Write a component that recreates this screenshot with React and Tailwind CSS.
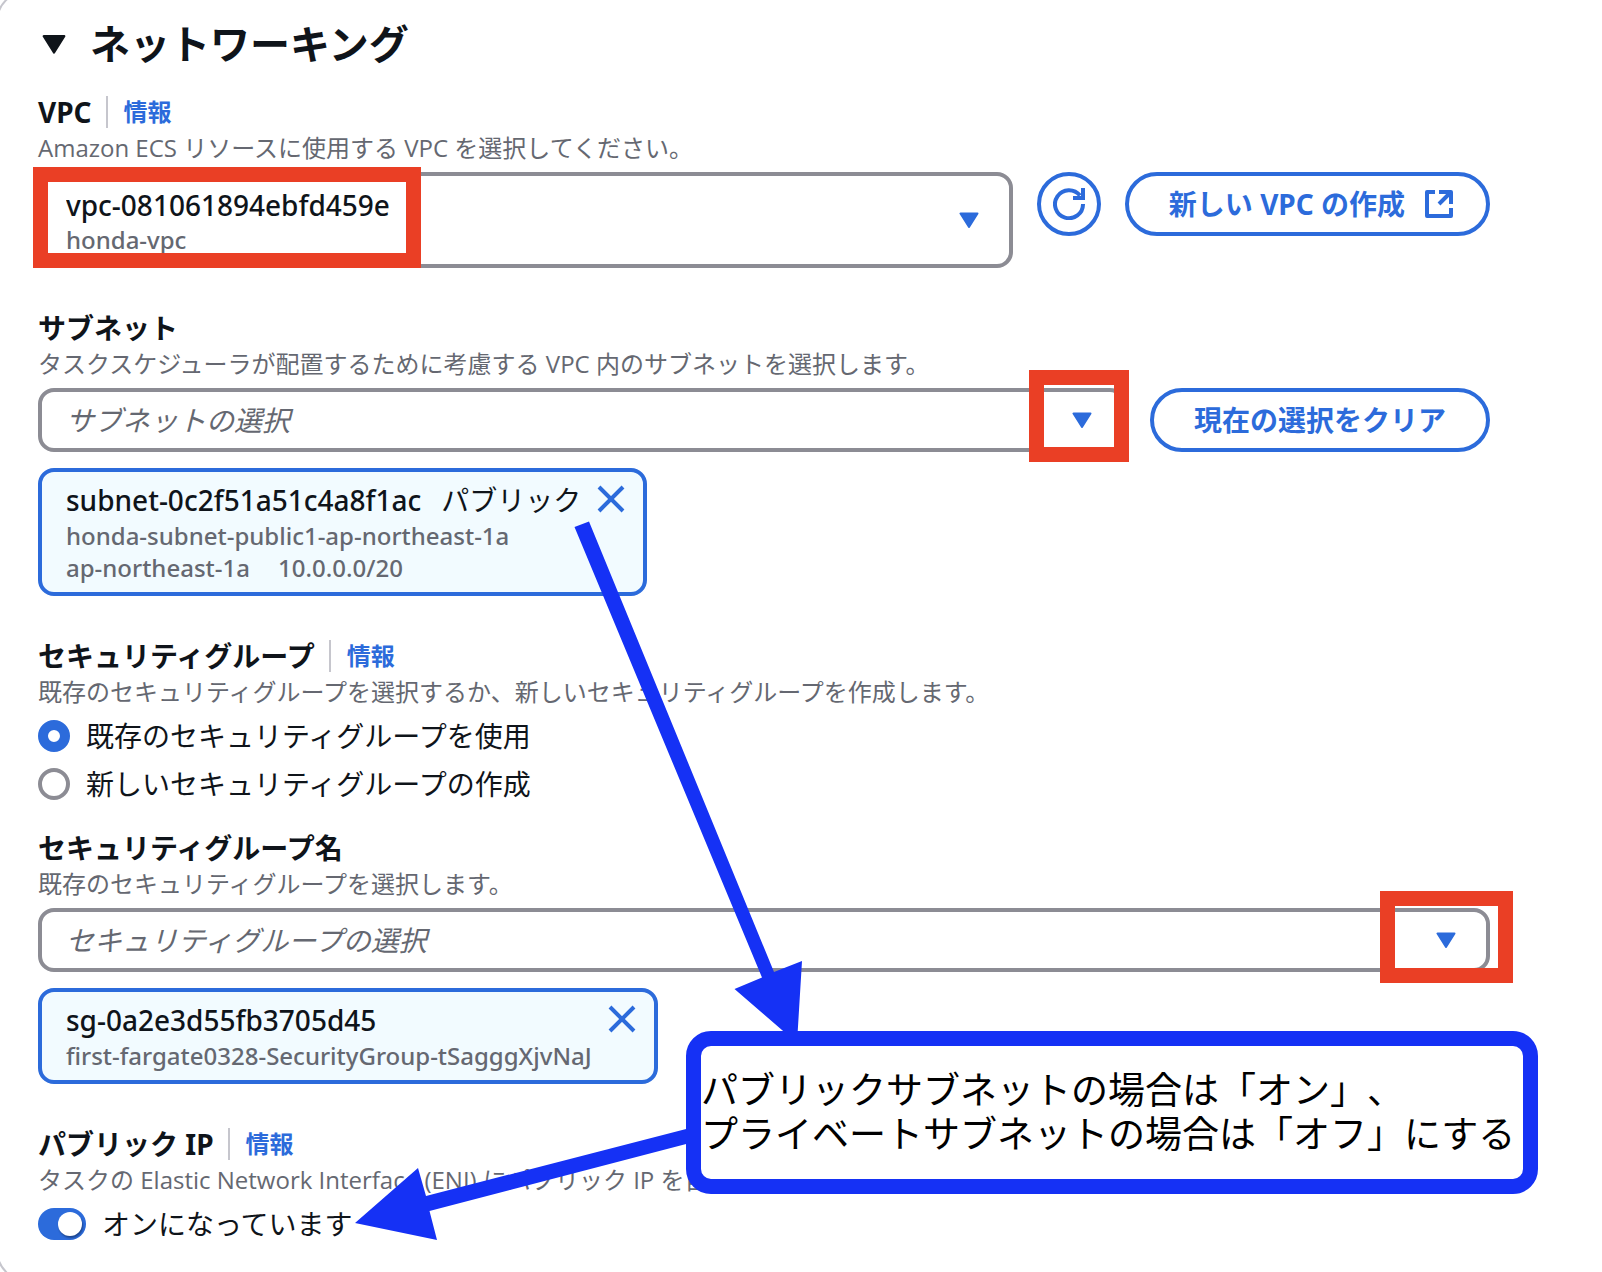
import React, { useState } from 'react';

const Caret = ({ className }) => (
  <svg className={className} viewBox="0 0 20 16" fill="currentColor" stroke="currentColor" strokeWidth="2" strokeLinejoin="round" aria-hidden="true">
    <path d="M1.5 1.5h17L10 15z" />
  </svg>
);

const RefreshIcon = () => (
  <svg className="w-8 h-8" viewBox="0 0 32 32" fill="none" stroke="currentColor" strokeWidth="4" aria-hidden="true">
    <path d="M30 16A14 14 0 1 1 27 7.500" />
    <path d="M30 0v10H20" />
  </svg>
);

const ExternalIcon = () => (
  <svg className="w-7 h-7" viewBox="0 0 28 28" fill="none" stroke="currentColor" strokeWidth="4" strokeLinejoin="round" aria-hidden="true">
    <path d="M10 2H2v24h24v-8" />
    <path d="M14 2h12v12M26 2L14 14" />
  </svg>
);

const CloseIcon = () => (
  <svg className="w-7 h-7" viewBox="0 0 28 28" fill="none" stroke="currentColor" strokeWidth="4" aria-hidden="true">
    <path d="M2 2l24 24M26 2L2 26" />
  </svg>
);

// Bold label with optional info link, and the grey description below it
const FieldHeader = ({ id, htmlFor, label, info, description }) => (
  <div className="mb-2">
    <div className="flex items-center h-10">
      <label id={id} htmlFor={htmlFor} className="text-[28px] leading-10 font-bold">{label}</label>
      {info && (
        <a href="#info" className="ml-3.5 pl-4 border-l-2 border-[#c6c6cd] text-2xl leading-8 font-bold text-[#2c6bdb]">情報</a>
      )}
    </div>
    <p className="text-2xl leading-8 text-[#656871] whitespace-nowrap font-['Open_Sans','Noto_Sans_CJK_JP',sans-serif]">{description}</p>
  </div>
);

const PlaceholderSelect = ({ id, placeholder, children }) => (
  <div className="relative flex-1">
    <select
      id={id}
      defaultValue=""
      className="block w-full h-16 appearance-none rounded-2xl border-4 border-[#8c8c94] bg-white pl-6 pr-16 text-[28px] italic text-[#656871]"
    >
      <option value="">{placeholder}</option>
    </select>
    <Caret className="absolute right-[34px] top-6 w-5 h-4 text-[#2c6bdb] pointer-events-none" />
    {children}
  </div>
);

const Token = ({ title, tag, name, details }) => (
  <div className="mt-4 w-fit flex items-start rounded-2xl border-4 border-[#2c6bdb] bg-[#f2fbff] py-2 pl-6 pr-[18px]">
    <div className="whitespace-nowrap">
      <p className="flex gap-5 text-[28px] leading-10 font-medium">
        <span>{title}</span>
        {tag && <span className="font-normal">{tag}</span>}
      </p>
      <p className="text-2xl leading-8 font-medium text-[#656871]">{name}</p>
      {details && (
        <p className="flex gap-7 text-2xl leading-8 font-medium text-[#656871]">
          {details.map((item) => <span key={item}>{item}</span>)}
        </p>
      )}
    </div>
    <button type="button" aria-label="削除" className="ml-4 mt-[5px] text-[#2c6bdb]"><CloseIcon /></button>
  </div>
);

const SECURITY_OPTIONS = [
  { value: 'existing', label: '既存のセキュリティグループを使用' },
  { value: 'new', label: '新しいセキュリティグループの作成' },
];

const App = () => {
  const [groupMode, setGroupMode] = useState('existing');
  const [publicIp, setPublicIp] = useState(true);

  return (
    <div className="relative overflow-hidden bg-white text-[#0f141a] font-['Noto_Sans','Noto_Sans_CJK_JP',sans-serif] [text-spacing-trim:space-all]">
      <main className="pt-5 pb-7 pl-[38px] pr-28">
        <h2 className="flex items-center text-[40px] leading-12 font-bold">
          <Caret className="ml-1 mr-6 w-6 h-5" />
          ネットワーキング
        </h2>

        {/* VPC */}
        <section className="mt-6">
          <FieldHeader htmlFor="vpc" label="VPC" info description="Amazon ECS リソースに使用する VPC を選択してください。" />
          <div className="flex items-start gap-6">
            <div className="relative flex-1">
              <select id="vpc" className="block w-full h-24 appearance-none rounded-2xl border-4 border-[#8c8c94] bg-white pt-2 pb-10 pl-6 pr-16 text-[28px] font-medium">
                <option>vpc-081061894ebfd459e</option>
              </select>
              <span className="absolute left-7 bottom-3 text-2xl leading-8 font-medium text-[#656871] pointer-events-none">honda-vpc</span>
              <Caret className="absolute right-[34px] top-10 w-5 h-4 text-[#2c6bdb] pointer-events-none" />
              <div className="absolute -left-[5px] -top-[5px] w-[388px] h-[101px] border-[15px] border-[#ea3f25] pointer-events-none" />
            </div>
            <button type="button" aria-label="更新" className="flex items-center justify-center w-16 h-16 rounded-full border-4 border-[#2c6bdb] text-[#2c6bdb]">
              <RefreshIcon />
            </button>
            <button type="button" className="flex items-center gap-5 h-16 pl-10 pr-[33px] rounded-full border-4 border-[#2c6bdb] text-[28px] font-bold text-[#2c6bdb] whitespace-nowrap">
              新しい VPC の作成
              <ExternalIcon />
            </button>
          </div>
        </section>

        {/* Subnets */}
        <section className="mt-10">
          <FieldHeader htmlFor="subnet" label="サブネット" description="タスクスケジューラが配置するために考慮する VPC 内のサブネットを選択します。" />
          <div className="flex gap-6">
            <PlaceholderSelect id="subnet" placeholder="サブネットの選択">
              <div className="absolute -right-[3px] -top-[18px] w-[100px] h-[92px] border-[15px] border-[#ea3f25] pointer-events-none" />
            </PlaceholderSelect>
            <button type="button" className="h-16 px-10 rounded-full border-4 border-[#2c6bdb] text-[28px] font-bold text-[#2c6bdb] whitespace-nowrap">
              現在の選択をクリア
            </button>
          </div>
          <Token
            title="subnet-0c2f51a51c4a8f1ac"
            tag="パブリック"
            name="honda-subnet-public1-ap-northeast-1a"
            details={['ap-northeast-1a', '10.0.0.0/20']}
          />
        </section>

        {/* Security group */}
        <section className="mt-10">
          <FieldHeader id="group-mode" label="セキュリティグループ" info description="既存のセキュリティグループを選択するか、新しいセキュリティグループを作成します。" />
          <div role="radiogroup" aria-labelledby="group-mode" className="flex flex-col gap-2">
            {SECURITY_OPTIONS.map(({ value, label }) => (
              <label key={value} className="flex items-center gap-4 text-[28px] leading-10">
                <input
                  type="radio"
                  name="group-mode"
                  checked={groupMode === value}
                  onChange={() => setGroupMode(value)}
                  className="appearance-none w-8 h-8 rounded-full border-4 border-[#8c8c94] bg-white checked:border-[10px] checked:border-[#2c6bdb]"
                />
                {label}
              </label>
            ))}
          </div>
        </section>

        <section className="mt-6">
          <FieldHeader htmlFor="group-name" label="セキュリティグループ名" description="既存のセキュリティグループを選択します。" />
          <PlaceholderSelect id="group-name" placeholder="セキュリティグループの選択">
            <div className="absolute -right-[23px] -top-[17px] w-[133px] h-[92px] border-[15px] border-[#ea3f25] pointer-events-none" />
          </PlaceholderSelect>
          <Token title="sg-0a2e3d55fb3705d45" name="first-fargate0328-SecurityGroup-tSagggXjvNaJ" />
        </section>

        {/* Public IP */}
        <section className="mt-10">
          <FieldHeader id="public-ip" label="パブリック IP" info description="タスクの Elastic Network Interface (ENI) にパブリック IP を自動" />
          <label className="flex items-center gap-4 w-fit text-[28px] leading-10">
            <span className="relative w-12 h-8">
              <input
                type="checkbox"
                role="switch"
                checked={publicIp}
                onChange={() => setPublicIp(!publicIp)}
                className="peer block appearance-none w-12 h-8 rounded-full bg-[#8c8c94] checked:bg-[#2c6bdb]"
              />
              <span className="absolute left-1 top-1 w-6 h-6 rounded-full bg-white shadow-[1px_2px_2px_rgba(0,0,0,0.35)] peer-checked:left-5 pointer-events-none" />
            </span>
            オンになっています
          </label>
        </section>
      </main>

      {/* Arrows and callout drawn over the form */}
      <svg className="absolute left-0 top-0 pointer-events-none" width="1602" height="1272" viewBox="0 0 1602 1272" fill="#1531f5" aria-hidden="true">
        <path d="M574.500 527L589 521.500L774 972L802 961L797 1043L734.500 989L762 977.500z" />
        <path d="M355 1223L418 1168L426 1196L690 1128V1143L429.500 1211L437 1240z" />
      </svg>
      <div className="absolute left-[686px] top-[1031px] w-[852px] h-[163px] rounded-[25px] border-[15px] border-[#1531f5] bg-white pt-[22px] text-[37px] leading-11 text-black whitespace-nowrap">
        <p>
          パブリックサブネットの場合は「オン」、
          <br />
          プライベートサブネットの場合は「オフ」にする
        </p>
      </div>

      {/* Rounded outline of the surrounding card */}
      <div className="absolute -left-1 -right-10 -top-[10px] -bottom-[10px] rounded-[32px] border-2 border-[#c6c6cd] pointer-events-none" />
    </div>
  );
};

export default App;
